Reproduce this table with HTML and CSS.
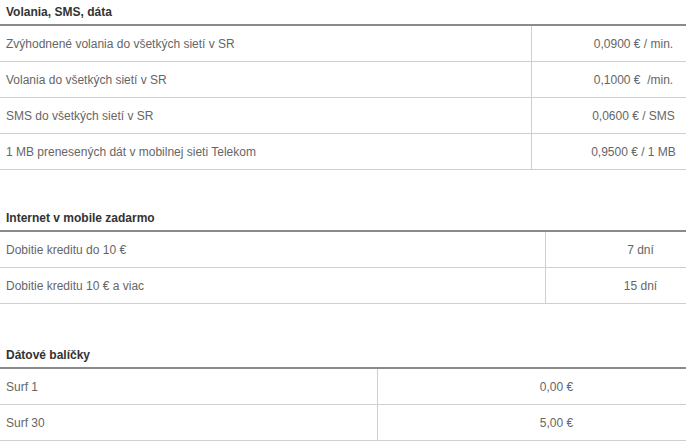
FILE: index.html
```html
<!DOCTYPE html>
<html lang="sk">
<head>
<meta charset="utf-8">
<title>Cenník</title>
<link rel="stylesheet" href="styles.css">
</head>
<body>
<section class="block">
  <h2 class="title">Volania, SMS, dáta</h2>
  <table class="prices col-531">
    <tr><td>Zvýhodnené volania do všetkých sietí v SR</td><td>0,0900 € / min.</td></tr>
    <tr><td>Volania do všetkých sietí v SR</td><td>0,1000 €&nbsp; /min.</td></tr>
    <tr><td>SMS do všetkých sietí v SR</td><td>0,0600 € / SMS</td></tr>
    <tr><td>1 MB prenesených dát v mobilnej sieti Telekom</td><td>0,9500 € / 1 MB</td></tr>
  </table>
</section>
<section class="block gap-36">
  <h2 class="title">Internet v mobile zadarmo</h2>
  <table class="prices col-545">
    <tr><td>Dobitie kreditu do 10 €</td><td>7 dní</td></tr>
    <tr><td>Dobitie kreditu 10 € a viac</td><td>15 dní</td></tr>
  </table>
</section>
<section class="block gap-39">
  <h2 class="title">Dátové balíčky</h2>
  <table class="prices col-377">
    <tr><td>Surf 1</td><td>0,00 €</td></tr>
    <tr><td>Surf 30</td><td>5,00 €</td></tr>
  </table>
</section>
</body>
</html>
```
FILE: styles.css
```css
html, body {
  margin: 0;
  padding: 0;
  background: #fff;
}
body {
  font-family: "Liberation Sans", Arial, sans-serif;
  font-size: 12px;
  color: #666;
  width: 686px;
}
.block {
  display: block;
}
.gap-36 { margin-top: 36px; }
.gap-39 { margin-top: 39px; }
.title {
  margin: 0;
  padding: 0 6px;
  height: 24px;
  line-height: 24px;
  font-size: 12px;
  font-weight: bold;
  color: #333;
  border-bottom: 2px solid #8a8a8a;
}
.prices {
  width: 100%;
  border-collapse: collapse;
  table-layout: fixed;
}
.prices td {
  height: 35px;
  padding: 0 6px;
  border-bottom: 1px solid #cfcfcf;
  vertical-align: middle;
  white-space: nowrap;
  box-sizing: content-box;
}
.prices td:first-child {
  text-align: left;
}
.prices td + td {
  text-align: center;
  border-left: 1px solid #cfcfcf;
  padding: 0 0 0 49px;
}
.col-531 td:first-child { width: 519px; }
.col-545 td:first-child { width: 533px; }
.col-377 td:first-child { width: 365px; }
```
